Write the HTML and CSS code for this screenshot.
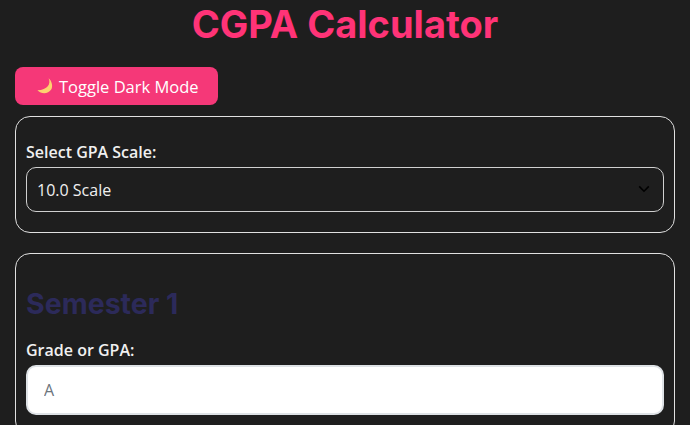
FILE: index.html
```html
<!DOCTYPE html>
<html lang="en">
<head>
    <meta charset="UTF-8">
    <meta name="viewport" content="width=device-width, initial-scale=1.0">
    <title>CGPA Calculator</title>
    <link rel="stylesheet" href="styles.css">
</head>
<body>
    <h1>CGPA Calculator</h1>

    <button class="toggle-btn" type="button">
        <svg class="moon" viewBox="0 0 18 18" width="18" height="18" aria-hidden="true">
            <path d="M12.6 1.2C15.2 6.8 11.6 13 1.4 13.3 5.4 17.6 12.2 17.2 15.2 12.6 17 9.6 16.2 4.2 12.6 1.2Z" fill="#fdd36f"/>
        </svg>
        Toggle Dark Mode
    </button>

    <div class="card">
        <label for="scale">Select GPA Scale:</label>
        <div class="select-wrap">
            <select id="scale">
                <option>10.0 Scale</option>
                <option>4.0 Scale</option>
            </select>
            <svg class="chevron" viewBox="0 0 12 8" width="12" height="8" aria-hidden="true">
                <path d="M1.2 1.4 6 6.2 10.8 1.4" fill="none" stroke="#000" stroke-width="1.6"/>
            </svg>
        </div>
    </div>

    <div class="card semester">
        <h2>Semester 1</h2>
        <label for="grade">Grade or GPA:</label>
        <input type="text" id="grade" placeholder="A">
    </div>
</body>
</html>
```

FILE: styles.css
```css
* {
    box-sizing: border-box;
}

html, body {
    height: 425px;
    overflow: hidden;
}

body {
    margin: 0;
    padding: 0 15px;
    background-color: #1e1e1e;
    color: #f0f0f0;
    font-family: "Open Sans", "Noto Sans", sans-serif;
    font-size: 16px;
}

h1 {
    margin: 0;
    padding-top: 2px;
    height: 67px;
    text-align: center;
    font-family: Inter, sans-serif;
    font-size: 38px;
    line-height: 44px;
    font-weight: 700;
    color: #ff3377;
}

.toggle-btn {
    display: flex;
    align-items: center;
    gap: 5px;
    width: 203px;
    height: 38px;
    padding: 0 0 0 21px;
    border: none;
    border-radius: 8px;
    background-color: #f53878;
    color: #fff;
    font-family: inherit;
    font-size: 16.5px;
    cursor: pointer;
}

.moon {
    flex: none;
}

.card {
    margin-top: 11px;
    padding: 24px 10px 20px;
    border: 1px solid #e0e0e0;
    border-radius: 15px;
}

.semester {
    margin-top: 20px;
    padding-top: 32px;
}

label {
    display: block;
    margin-bottom: 4px;
    font-weight: 600;
    font-size: 16px;
    line-height: 22px;
}

.select-wrap {
    position: relative;
}

select {
    display: block;
    width: 100%;
    height: 45px;
    padding: 0 10px;
    border: 1px solid #d0d0d0;
    border-radius: 10px;
    background-color: #1e1e1e;
    color: #f0f0f0;
    font-family: inherit;
    font-size: 16px;
    appearance: none;
}

.chevron {
    position: absolute;
    top: 18px;
    right: 14px;
}

h2 {
    margin: 0 0 17px;
    font-family: Inter, sans-serif;
    font-size: 28.5px;
    line-height: 36px;
    font-weight: 700;
    color: #2c2a5a;
}

input[type="text"] {
    display: block;
    width: 100%;
    height: 50px;
    padding: 0 16px;
    border: 2px solid #dee2e6;
    border-radius: 10px;
    background-color: #fff;
    font-family: inherit;
    font-size: 16px;
}

input::placeholder {
    color: #6c757d;
}
```
